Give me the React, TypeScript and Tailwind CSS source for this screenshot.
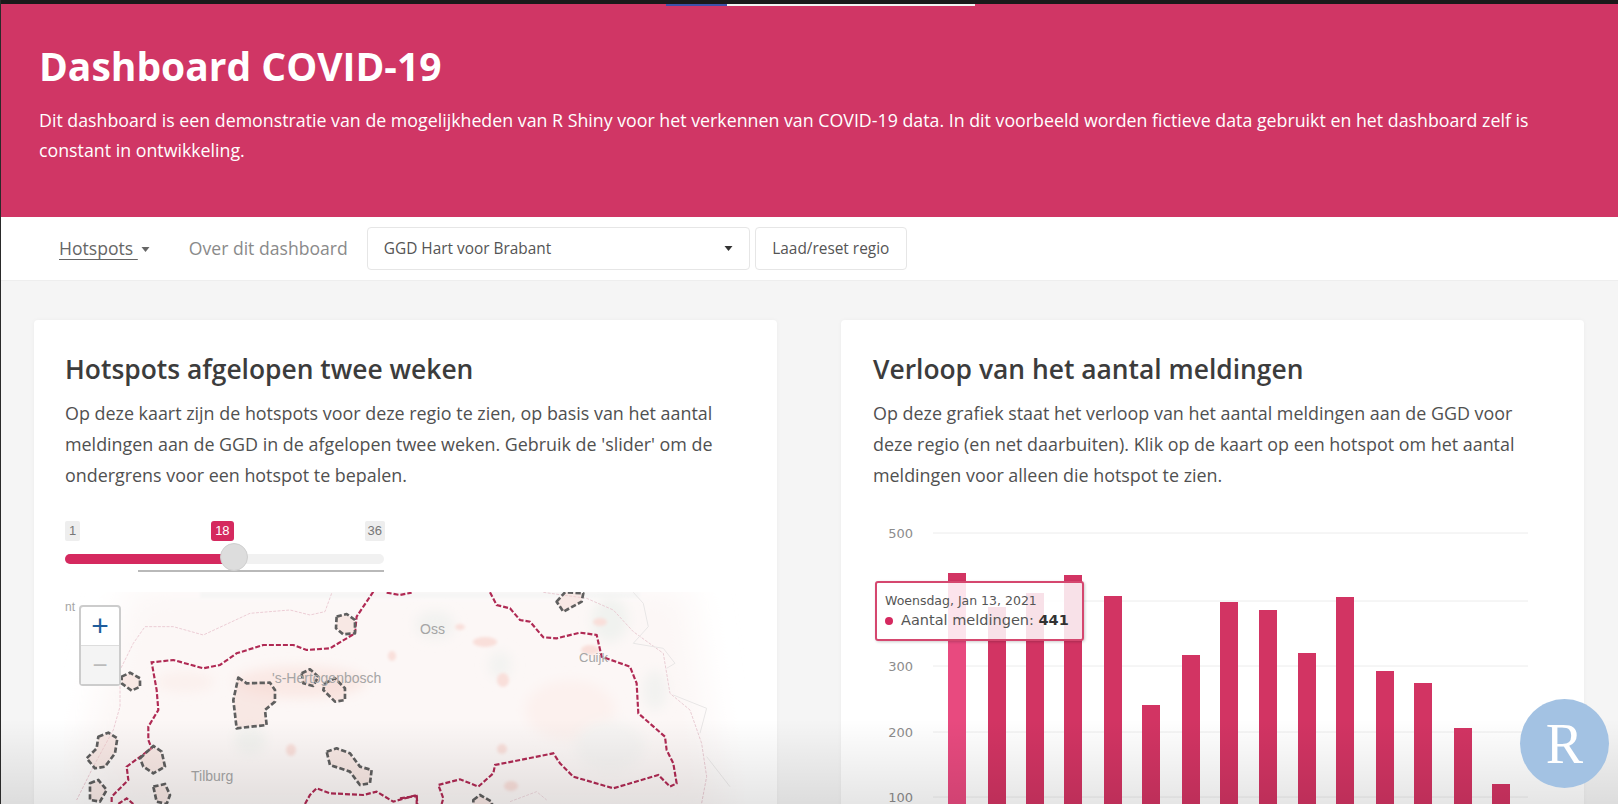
import React from "react";

const sans = { fontFamily: '"Open Sans", "Noto Sans", sans-serif' };

const bars: [number, number][] = [
  [947, 573], [987, 607], [1025, 593], [1063, 575], [1103, 596], [1141, 705], [1181, 655], [1219, 602],
  [1258, 610], [1297, 653], [1335, 597], [1375, 671], [1413, 683], [1453, 728], [1491, 784],
];

const grid = [533, 601, 666, 732, 797];
const labels: [string, number][] = [["500", 533], ["300", 666], ["200", 732], ["100", 797]];

const hotspots2 = [
  "920,350 950,342 975,360 975,400 940,403 918,385",
  "275,530 300,518 330,535 330,560 305,572 275,550",
  "625,533 650,550 720,548 735,570 735,605 705,630 710,675 620,685 610,600",
  "815,520 840,508 865,530 850,558 820,550",
  "885,550 915,535 945,565 945,600 915,605 880,570",
  "205,710 235,698 262,715 255,760 225,800 195,805 170,775 200,745",
  "180,850 205,840 230,870 210,905 180,900",
  "330,775 370,738 395,755 405,800 370,820 340,800",
  "370,860 405,852 420,885 410,912 380,905",
  "890,755 920,745 960,760 990,800 1025,810 1020,850 990,855 960,815 900,795",
];
const hotspots3 = [
  "470,125 495,97 550,100 545,125 490,155",
  "220,720 240,705 275,725 278,745 220,745",
];

function MapDrawing() {
  return (
    <svg viewBox="64 592 681 212" className="block w-[681px] h-[212px]">
      <defs>
        <filter id="b1" x="-20%" y="-20%" width="140%" height="140%"><feGaussianBlur stdDeviation="18" /></filter>
        <filter id="b2" x="-50%" y="-50%" width="200%" height="200%"><feGaussianBlur stdDeviation="6" /></filter>
        <filter id="b3" x="-50%" y="-50%" width="200%" height="200%"><feGaussianBlur stdDeviation="1.5" /></filter>
      </defs>
      <polygon points="130,585 690,585 725,820 110,820 80,760" fill="#fcf7f6" filter="url(#b1)" />
      <rect x="200" y="592" width="440" height="6" fill="#f6f6f5" filter="url(#b3)" />
      <g filter="url(#b2)">
        <ellipse cx="300" cy="682" rx="66" ry="16" fill="#fae9e5" />
        <ellipse cx="185" cy="682" rx="30" ry="10" fill="#fbf0ed" />
        <ellipse cx="435" cy="625" rx="20" ry="14" fill="#f2f2f0" />
        <ellipse cx="610" cy="620" rx="18" ry="22" fill="#f0f2ef" />
        <ellipse cx="655" cy="690" rx="12" ry="20" fill="#f2f2f0" />
        <ellipse cx="500" cy="665" rx="12" ry="14" fill="#f3f3f1" />
        <ellipse cx="570" cy="710" rx="45" ry="30" fill="#fcf1ee" />
        <ellipse cx="610" cy="745" rx="35" ry="25" fill="#f6f4f3" />
        <ellipse cx="250" cy="740" rx="16" ry="14" fill="#f3f3f0" />
      </g>
      <g filter="url(#b3)" fill="#f9dfda">
        <ellipse cx="503" cy="680" rx="6" ry="7" />
        <ellipse cx="502" cy="749" rx="5" ry="5" />
        <ellipse cx="511" cy="786" rx="7" ry="5" />
        <ellipse cx="460" cy="627" rx="5" ry="3" />
        <ellipse cx="291" cy="750" rx="5" ry="6" />
        <ellipse cx="392" cy="656" rx="4" ry="5" />
        <ellipse cx="485" cy="642" rx="12" ry="5" />
        <ellipse cx="590" cy="650" rx="9" ry="5" />
        <ellipse cx="600" cy="622" rx="7" ry="4" />
      </g>

      {/* pale outer boundary */}
      <g transform="translate(30 500) scale(0.3333)" fill="none" stroke="#eccdd5" strokeWidth="3" strokeDasharray="9 4">
        <polyline points="905,280 885,335 840,345 780,330 660,340 520,405 430,380 345,380 310,430 270,510 270,620 250,690 190,800 140,900" />
      </g>
      <g transform="translate(400 560) scale(0.3333)" fill="none" strokeWidth="3">
        <polyline points="430,97 560,115 640,150 700,215 790,280 810,400 870,450 905,550 920,650 905,730" stroke="#e9cdd4" strokeDasharray="9 4" />
        <polyline points="700,97 730,130 745,200 700,250 790,265 825,310 800,325" stroke="#e8e6e6" />
        <polyline points="820,405 920,445 900,520" stroke="#e8e6e6" />
        <polyline points="920,590 990,680" stroke="#ebe9e9" />
        <polyline points="330,725 410,695 440,720" stroke="#eed9de" strokeDasharray="9 4" />
      </g>

      {/* region boundary */}
      <g transform="translate(30 500) scale(0.3333)" fill="none" stroke="#b02a54" strokeWidth="6.5" strokeDasharray="15 6">
        <polyline points="1030,275 980,350 975,400 900,445 830,450 790,435 700,435 620,460 570,495 520,505 430,480 365,487 380,570 385,630 355,680 355,720 365,745 290,800 295,840 245,890 245,912" />
        <polyline points="1070,278 1110,285 1145,278" />
        <polyline points="825,912 840,885 860,865 900,880 1000,885 1040,875 1090,905 1160,885 1162,912" />
        <polyline points="265,912 290,895 310,912" />
      </g>
      <g transform="translate(400 560) scale(0.3333)" fill="none" stroke="#b02a54" strokeWidth="6.5" strokeDasharray="15 6">
        <polyline points="270,97 290,135 330,145 360,180 390,185 430,232 470,235 540,218 590,225 605,290 690,320 710,370 715,460 795,530 800,570 820,610 830,670 810,680 775,645 640,685 520,650 480,610 460,580 285,615 280,640 235,680 180,658 115,675 130,715 125,732" />
        <polyline points="0,715 50,708 50,732" />
      </g>

      {/* hotspots */}
      <g transform="translate(30 500) scale(0.3333)" fill="#f5d5ce" fillOpacity="0.45" stroke="#5f5f5f" strokeWidth="8" strokeDasharray="16 7" strokeLinejoin="round">
        {hotspots2.map((p) => <polygon key={p} points={p} />)}
      </g>
      <g transform="translate(400 560) scale(0.3333)" fill="#f5d5ce" fillOpacity="0.45" stroke="#5f5f5f" strokeWidth="8" strokeDasharray="16 7" strokeLinejoin="round">
        {hotspots3.map((p) => <polygon key={p} points={p} />)}
      </g>

      <g fontFamily='"Liberation Sans", sans-serif' fontSize="14" fill="#a5a5a5">
        <text x="65" y="611" fontSize="12">nt</text>
        <text x="420" y="634" fontSize="14">Oss</text>
        <text x="579" y="662" fontSize="13">Cuijk</text>
        <text x="272" y="683" fontSize="14">'s-Hertogenbosch</text>
        <text x="191" y="781" fontSize="14">Tilburg</text>
      </g>
    </svg>
  );
}

function Chart() {
  return (
    <svg viewBox="870 520 700 284" className="block w-[700px] h-[284px]">
      {grid.map((y) => <line key={y} x1="932" x2="1527" y1={y} y2={y} stroke="#ececec" strokeWidth="1" />)}
      {labels.map(([t, y]) => (
        <text key={t} x="912" y={y + 5} textAnchor="end" fontFamily='"DejaVu Sans", sans-serif' fontSize="13" fill="#8c8c8c">{t}</text>
      ))}
      {bars.map(([x, top], i) => (
        <rect key={x} x={x} y={top} width="18" height={804 - top} fill={i === 0 ? "#e84a7f" : "#d23463"} />
      ))}
      <rect x="947" y="573" width="18" height="8" fill="#d23463" />
    </svg>
  );
}

function Caret({ className }: { className: string }) {
  return (
    <svg viewBox="0 0 8 5" className={className}><polygon points="0,0 8,0 4,5" fill="currentColor" /></svg>
  );
}

export default function App() {
  return (
    <div className="relative h-[804px] w-[1618px] overflow-hidden bg-[#f5f5f5] border-l border-l-[#2a2a2a]" style={sans}>
      <div className="relative h-[4px] bg-[#1a1a1a]" />
      <div className="absolute left-[665px] top-[4px] flex h-[2px]">
        <div className="w-[61px] bg-[#3f51a8]" />
        <div className="w-[248px] bg-[#f3f3f3]" />
      </div>

      <header className="h-[213px] bg-[#d03665] pl-[38px] pr-[60px] pt-[37px] text-white">
        <h1 className="text-[39px] font-bold leading-[50px]">Dashboard COVID-19</h1>
        <p className="mt-[14px] text-[17.8px] leading-[30px]">
          Dit dashboard is een demonstratie van de mogelijkheden van R Shiny voor het verkennen van COVID-19 data. In dit voorbeeld worden fictieve data gebruikt en het dashboard zelf is constant in ontwikkeling.
        </p>
      </header>

      <nav className="flex h-[64px] items-center border-b border-b-[#eeeeee] bg-white pl-[58px] text-[17.6px]">
        <div className="flex items-center text-[#666666]">
          <span className="underline underline-offset-4">Hotspots&nbsp;</span>
          <Caret className="ml-[3px] mt-[2px] h-[5px] w-[9px]" />
        </div>
        <span className="ml-[39px] text-[#8a8a8a]">Over dit dashboard</span>
        <div className="ml-[19px] flex h-[43px] w-[383px] items-center justify-between rounded border border-[#e6e6e6] pl-[16px] pr-[16px] text-[15.4px] text-[#555555]">
          <span>GGD Hart voor Brabant</span>
          <Caret className="h-[5px] w-[9px] text-[#333333]" />
        </div>
        <div className="ml-[5px] flex h-[43px] w-[152px] items-center justify-center rounded border border-[#e6e6e6] text-[15.4px] text-[#555555]">
          Laad/reset regio
        </div>
      </nav>

      <main className="flex gap-[64px] pl-[33px] pt-[39px]">
        <section className="h-[600px] w-[743px] rounded bg-white pl-[31px] pr-[20px] pt-[32px] shadow-[0_0_4px_rgba(0,0,0,0.04)]">
          <h2 className="text-[26.4px] font-semibold leading-[34px] text-[#3c3c3c]">Hotspots afgelopen twee weken</h2>
          <p className="mt-[12px] text-[17.9px] leading-[31px] text-[#505050]">
            Op deze kaart zijn de hotspots voor deze regio te zien, op basis van het aantal meldingen aan de GGD in de afgelopen twee weken. Gebruik de 'slider' om de ondergrens voor een hotspot te bepalen.
          </p>
          <div className="relative mt-[30px] h-[62px] w-[320px]" style={{ fontFamily: '"Liberation Sans", sans-serif' }}>
            <div className="flex h-[21px] items-start justify-between text-[13px] leading-[20px]">
              <span className="rounded-[2px] bg-[#eeeeee] px-[4px] text-[#777777]">1</span>
              <span className="rounded-[3px] bg-[#d5295f] px-[4px] text-white">18</span>
              <span className="rounded-[2px] bg-[#eeeeee] px-[3px] text-[#777777]">36</span>
            </div>
            <div className="mt-[12px] flex h-[10px] w-[319px] overflow-hidden rounded-full bg-[#f1f1f1]">
              <div className="h-full w-[160px] bg-[#d5295f]" />
            </div>
            <div className="absolute left-[155px] top-[22px] h-[28px] w-[28px] rounded-full border border-[#cfcfcf] bg-[#dddddd]" />
            <div className="ml-[73px] mt-[6px] h-[2px] w-[246px] bg-[#b9b9b9]" />
          </div>
          <div className="relative ml-[-1px] mt-[9px]">
            <MapDrawing />
            <div className="absolute left-[15px] top-[13px] flex h-[81px] w-[42px] flex-col rounded-[4px] border-2 border-[#cccccc] bg-white">
              <div className="flex h-[39px] items-center justify-center border-b border-b-[#dddddd] text-[30px] leading-none text-[#1e5c9c]" style={{ fontFamily: '"Liberation Sans", sans-serif' }}>+</div>
              <div className="flex flex-1 items-center justify-center bg-[#f4f4f4] text-[26px] leading-none text-[#bbbbbb]" style={{ fontFamily: '"Liberation Sans", sans-serif' }}>−</div>
            </div>
          </div>
        </section>

        <section className="h-[600px] w-[743px] rounded bg-white pl-[32px] pt-[32px] shadow-[0_0_4px_rgba(0,0,0,0.04)]">
          <h2 className="text-[26.4px] font-semibold leading-[34px] text-[#3c3c3c]">Verloop van het aantal meldingen</h2>
          <p className="mt-[12px] w-[660px] text-[17.9px] leading-[31px] text-[#505050]">
            Op deze grafiek staat het verloop van het aantal meldingen aan de GGD voor deze regio (en net daarbuiten). Klik op de kaart op een hotspot om het aantal meldingen voor alleen die hotspot te zien.
          </p>
          <div className="relative ml-[-2px] mt-[29px]">
            <Chart />
            <div className="absolute left-[4px] top-[61px] h-[60px] w-[209px] rounded-[3px] border-2 border-[#d5476f] bg-white/85 pl-[8px] pt-[8px] shadow-[1px_1px_3px_rgba(0,0,0,0.2)]" style={{ fontFamily: '"DejaVu Sans", sans-serif' }}>
              <div className="text-[12.5px] leading-[20px] text-[#555555]">Woensdag, Jan 13, 2021</div>
              <div className="flex items-center text-[14.5px] leading-[19px] text-[#555555]">
                <span className="mr-[8px] h-[8px] w-[8px] rounded-full bg-[#d5295f]" />
                <span>Aantal meldingen: <b className="text-[#333333]">441</b></span>
              </div>
            </div>
          </div>
        </section>
      </main>

      <div className="pointer-events-none absolute bottom-0 left-0 right-0 h-[85px] bg-linear-to-b from-transparent to-black/10" />
      <div className="absolute left-[1519px] top-[699px] flex h-[89px] w-[89px] items-center justify-center rounded-full bg-[#a3c2e3] text-[56px] leading-none text-white" style={{ fontFamily: '"Liberation Serif", serif' }}>R</div>
    </div>
  );
}
